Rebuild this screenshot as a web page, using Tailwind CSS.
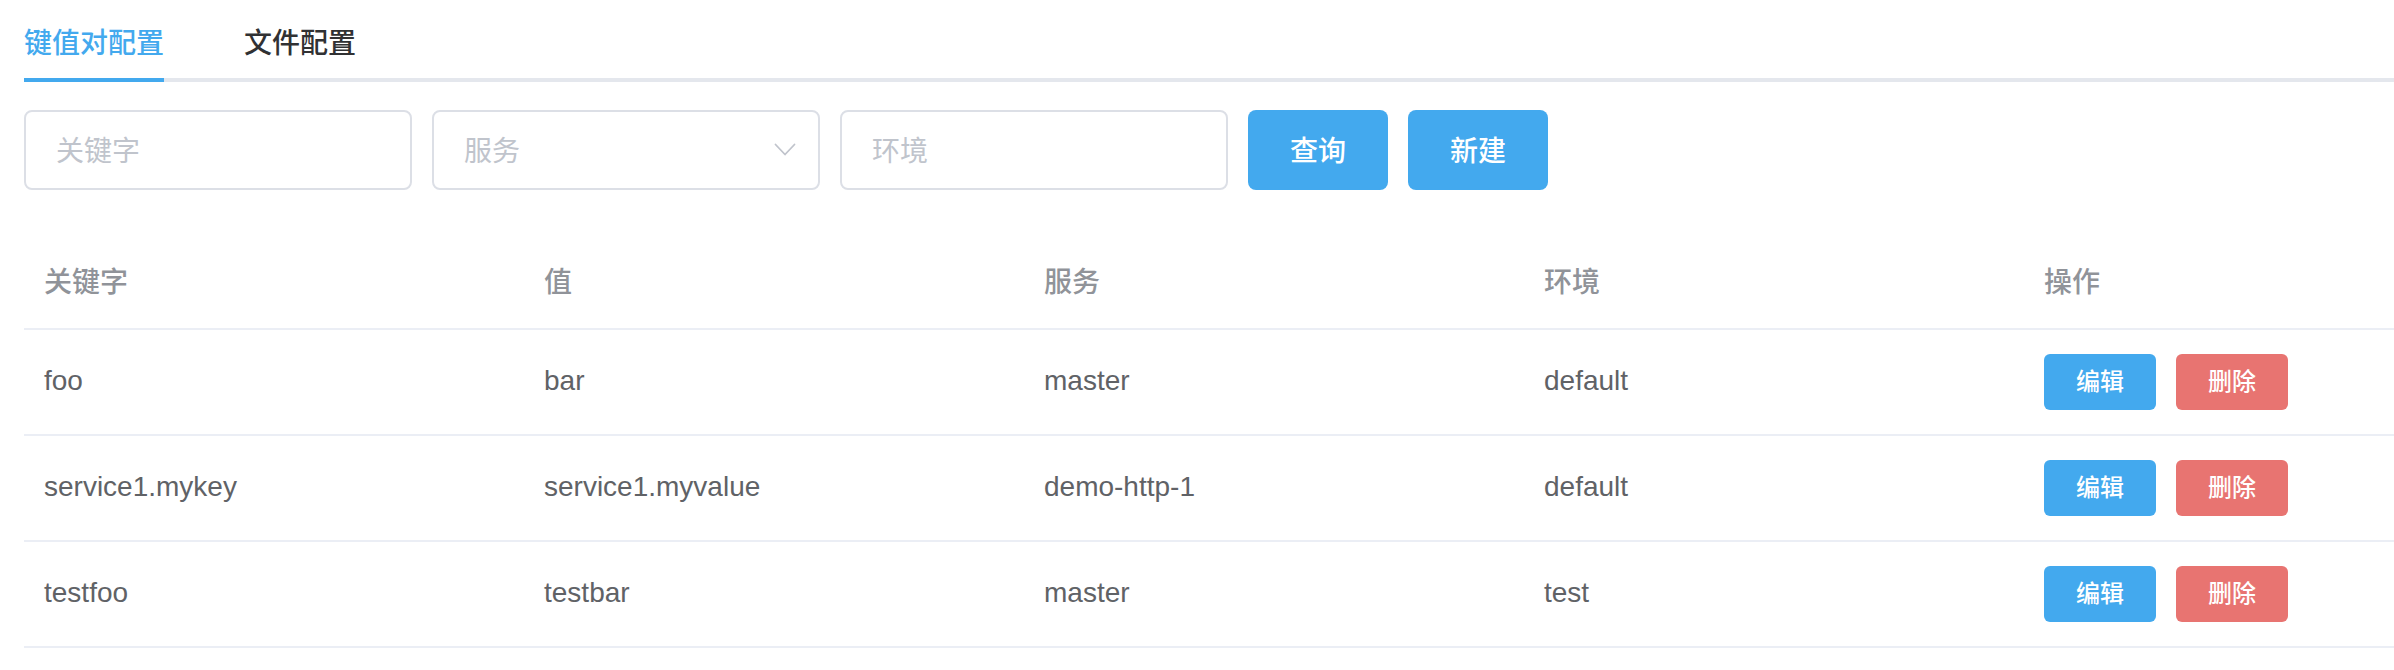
<!DOCTYPE html>
<html lang="zh-CN">
<head>
<meta charset="utf-8">
<meta name="viewport" content="width=device-width, initial-scale=1">
<title>键值对配置</title>
<script src="https://cdn.jsdelivr.net/npm/@tailwindcss/browser@4"></script>
</head>
<body class="bg-white pl-6 font-['Liberation_Sans','Noto_Sans_CJK_SC',sans-serif] text-[28px] leading-9 text-[#606266]">
  <nav role="tablist" class="flex gap-20 border-b-4 border-[#e4e7ed] font-medium">
    <button type="button" role="tab" aria-selected="true" class="-mb-1 border-b-4 border-[#43a9ee] pt-[26px] pb-4 text-[#43a9ee]">键值对配置</button>
    <button type="button" role="tab" aria-selected="false" class="-mb-1 border-b-4 border-transparent pt-[26px] pb-4 text-[#303133]">文件配置</button>
  </nav>

  <form class="mt-7 flex flex-wrap gap-5">
    <input type="text" aria-label="关键字" placeholder="关键字" class="h-20 w-[388px] rounded-lg border-2 border-[#dcdfe6] px-[30px] pt-1 placeholder:text-[#c0c4cc]">
    <div class="relative">
      <select aria-label="服务" class="h-20 w-[388px] appearance-none rounded-lg border-2 border-[#dcdfe6] bg-white px-[30px] pt-1 text-[#c0c4cc]">
        <option value="">服务</option>
        <option>master</option>
        <option>demo-http-1</option>
      </select>
      <svg class="pointer-events-none absolute top-8 right-6 h-4 w-[22px]" viewBox="0 0 22 16" fill="none" stroke="#c0c4cc" stroke-width="1.8" stroke-linecap="round" stroke-linejoin="round" aria-hidden="true"><path d="M1.5 2.5 11 12.5 20.5 2.5"/></svg>
    </div>
    <input type="text" aria-label="环境" placeholder="环境" class="h-20 w-[388px] rounded-lg border-2 border-[#dcdfe6] px-[30px] pt-1 placeholder:text-[#c0c4cc]">
    <button type="button" class="h-20 rounded-lg bg-[#43a9ee] px-[42px] pt-1 font-medium text-white">查询</button>
    <button type="button" class="h-20 rounded-lg bg-[#43a9ee] px-[42px] pt-1 font-medium text-white">新建</button>
  </form>

  <table class="mt-11 w-full table-fixed border-separate border-spacing-0 text-left">
    <thead class="text-[#909399]">
      <tr class="h-24 *:border-b-2 *:border-[#ebeef5] *:px-5 *:pt-1 *:font-medium">
        <th scope="col" class="w-[500px]">关键字</th>
        <th scope="col" class="w-[500px]">值</th>
        <th scope="col" class="w-[500px]">服务</th>
        <th scope="col" class="w-[500px]">环境</th>
        <th scope="col">操作</th>
      </tr>
    </thead>
    <tbody>
      <tr class="*:border-b-2 *:border-[#ebeef5] *:px-5">
        <td class="pb-0.5">foo</td>
        <td class="pb-0.5">bar</td>
        <td class="pb-0.5">master</td>
        <td class="pb-0.5">default</td>
        <td class="py-6">
          <div class="flex gap-5 text-2xl font-medium text-white">
            <button type="button" class="h-14 rounded-md bg-[#43a9ee] px-8">编辑</button>
            <button type="button" class="h-14 rounded-md bg-[#e87471] px-8">删除</button>
          </div>
        </td>
      </tr>
      <tr class="*:border-b-2 *:border-[#ebeef5] *:px-5">
        <td class="pb-0.5">service1.mykey</td>
        <td class="pb-0.5">service1.myvalue</td>
        <td class="pb-0.5">demo-http-1</td>
        <td class="pb-0.5">default</td>
        <td class="py-6">
          <div class="flex gap-5 text-2xl font-medium text-white">
            <button type="button" class="h-14 rounded-md bg-[#43a9ee] px-8">编辑</button>
            <button type="button" class="h-14 rounded-md bg-[#e87471] px-8">删除</button>
          </div>
        </td>
      </tr>
      <tr class="*:border-b-2 *:border-[#ebeef5] *:px-5">
        <td class="pb-0.5">testfoo</td>
        <td class="pb-0.5">testbar</td>
        <td class="pb-0.5">master</td>
        <td class="pb-0.5">test</td>
        <td class="py-6">
          <div class="flex gap-5 text-2xl font-medium text-white">
            <button type="button" class="h-14 rounded-md bg-[#43a9ee] px-8">编辑</button>
            <button type="button" class="h-14 rounded-md bg-[#e87471] px-8">删除</button>
          </div>
        </td>
      </tr>
    </tbody>
  </table>
</body>
</html>
